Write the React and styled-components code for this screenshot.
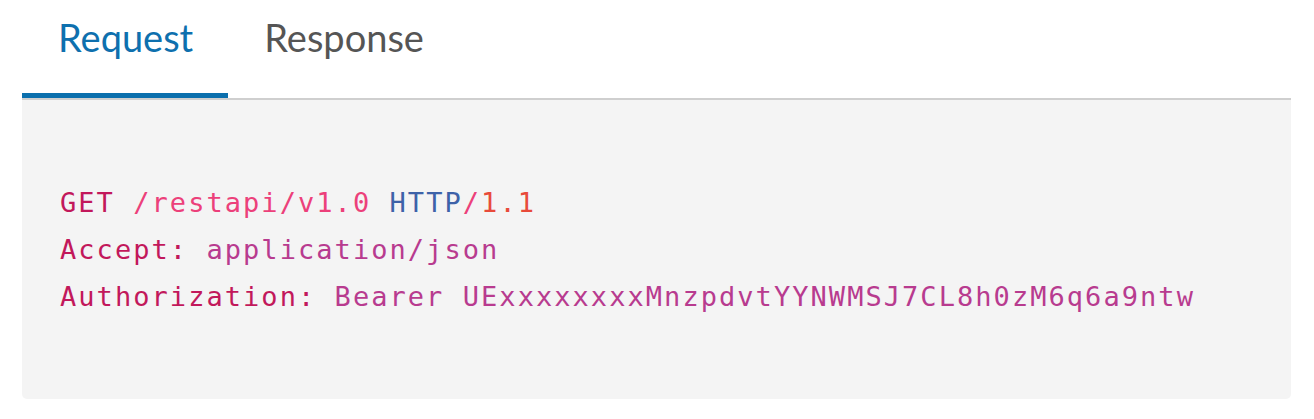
import React, { useState } from "react";
import styled, { createGlobalStyle } from "styled-components";

const Global = createGlobalStyle`
  html, body { margin: 0; padding: 0; background: #ffffff; }
  body { font-family: Lato, "Open Sans", sans-serif; }
`;

const Wrapper = styled.div`
  padding: 0 23px 0 22px;
`;

const TabList = styled.div`
  display: flex;
  border-bottom: 2px solid #cfcfcf;
`;

const Tab = styled.button`
  appearance: none;
  background: none;
  border: none;
  border-bottom: 5px solid ${(p) => (p.$active ? "#0b6fad" : "transparent")};
  margin: 0;
  padding: 15px 35px 32px 36px;
  font-family: Lato, sans-serif;
  font-size: 38px;
  line-height: 1.2;
  color: ${(p) => (p.$active ? "#0e70ae" : "#555555")};
  cursor: pointer;
`;

const Panel = styled.pre`
  margin: 0;
  background: #f4f4f4;
  border-radius: 0 0 5px 5px;
  padding: 79px 38px 79px 38px;
  font-family: "DejaVu Sans Mono", monospace;
  font-size: 27px;
  line-height: 47px;
  letter-spacing: 2.05px;
  white-space: pre;
`;

const Tok = styled.span`
  color: ${(p) => p.$c};
`;

const C = {
  key: "#c2185b",
  path: "#ec407a",
  proto: "#3d62a8",
  ver: "#e84a3a",
  val: "#b83b8f",
};

export default function App() {
  const [tab, setTab] = useState("req");
  return (
    <Wrapper>
      <Global />
      <TabList>
        <Tab $active={tab === "req"} onClick={() => setTab("req")}>Request</Tab>
        <Tab $active={tab === "res"} onClick={() => setTab("res")}>Response</Tab>
      </TabList>
      <Panel>
        <Tok $c={C.key}>GET</Tok> <Tok $c={C.path}>/restapi/v1.0</Tok> <Tok $c={C.proto}>HTTP</Tok><Tok $c={C.path}>/</Tok><Tok $c={C.ver}>1.1</Tok>
        {"\n"}
        <Tok $c={C.key}>Accept:</Tok> <Tok $c={C.val}>application/json</Tok>
        {"\n"}
        <Tok $c={C.key}>Authorization:</Tok> <Tok $c={C.val}>Bearer UExxxxxxxxMnzpdvtYYNWMSJ7CL8h0zM6q6a9ntw</Tok>
      </Panel>
    </Wrapper>
  );
}
